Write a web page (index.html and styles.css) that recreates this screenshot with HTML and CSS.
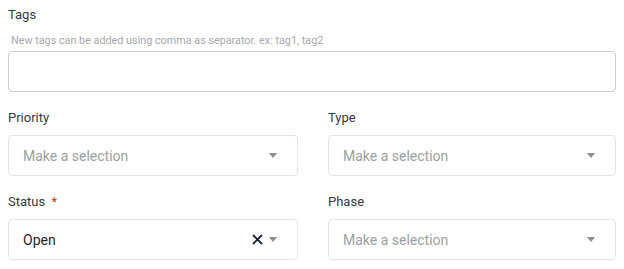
FILE: index.html
```html
<!DOCTYPE html>
<html lang="en">
<head>
  <meta charset="UTF-8" />
  <title>Issue fields</title>
  <link rel="stylesheet" href="styles.css">
</head>
<body>
  <form class="fields">
    <div class="field field-wide">
      <label class="field-label">Tags</label>
      <div class="field-hint">New tags can be added using comma as separator. ex: tag1, tag2</div>
      <input type="text" class="tags-input" />
    </div>

    <div class="field">
      <label class="field-label">Priority</label>
      <div class="select">
        <span class="select-value placeholder">Make a selection</span>
        <span class="select-arrow"></span>
      </div>
    </div>
    <div class="field">
      <label class="field-label">Type</label>
      <div class="select">
        <span class="select-value placeholder">Make a selection</span>
        <span class="select-arrow"></span>
      </div>
    </div>

    <div class="field">
      <label class="field-label">Status <span class="required">*</span></label>
      <div class="select">
        <span class="select-value">Open</span>
        <svg class="select-clear" width="11" height="11" viewBox="0 0 11 11">
          <path d="M1 1 L10 10 M10 1 L1 10" stroke="#1b2333" stroke-width="1.8" fill="none"/>
        </svg>
        <span class="select-arrow"></span>
      </div>
    </div>
    <div class="field">
      <label class="field-label">Phase</label>
      <div class="select">
        <span class="select-value placeholder">Make a selection</span>
        <span class="select-arrow"></span>
      </div>
    </div>
  </form>
</body>
</html>
```

FILE: styles.css
```css
:root {
  --text-color: #333a44;
  --muted-color: #a4a8ad;
  --placeholder-color: #9b9fa4;
  --border-color: #c9cbce;
  --select-border: #e1e5ea;
  --arrow-color: #8a8d91;
  --required-color: #c0392b;
}
html, body {
  margin: 0;
  padding: 0;
  background: #fff;
  font-family: Roboto, 'Liberation Sans', sans-serif;
  color: var(--text-color);
}
.fields {
  display: grid;
  grid-template-columns: 290px 288px;
  column-gap: 30px;
  row-gap: 18px;
  padding: 7px 8px 0;
}
.field-wide {
  grid-column: 1 / -1;
}
.field {
  display: flex;
  flex-direction: column;
}
.field-label {
  font-size: 13px;
  line-height: 15px;
  color: var(--text-color);
  margin-bottom: 10px;
}
.required {
  color: var(--required-color);
  margin-left: 3px;
}
.field-hint {
  font-size: 10.8px;
  line-height: 13px;
  color: var(--muted-color);
  margin: 2px 0 4px 3px;
}
.tags-input {
  box-sizing: border-box;
  height: 41px;
  width: 100%;
  border: 1px solid var(--border-color);
  border-radius: 4px;
  outline: none;
  margin: 0;
}
.select {
  box-sizing: border-box;
  height: 41px;
  border: 1px solid var(--select-border);
  border-radius: 4px;
  display: flex;
  align-items: center;
  padding: 0 20px 0 14px;
}
.select-value {
  flex: 1;
  font-size: 14px;
  color: #1f2530;
}
.select-value.placeholder {
  color: var(--placeholder-color);
}
.select-clear {
  margin-right: 6px;
}
.select-arrow {
  width: 0;
  height: 0;
  border-left: 4px solid transparent;
  border-right: 4px solid transparent;
  border-top: 5px solid var(--arrow-color);
}
```
